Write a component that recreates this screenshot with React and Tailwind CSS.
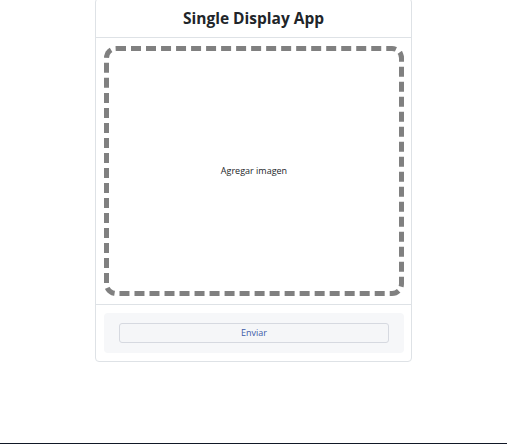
export default function App() {
  return (
    <div className="h-[444px] w-full border-b border-[#111827] bg-white overflow-hidden" style={{ fontFamily: '"Open Sans", "Noto Sans", sans-serif' }}>
      <div className="mx-auto -mt-[2px] w-[317px] rounded border border-[#dee2e6] bg-white">
        <div className="flex h-[39px] items-center justify-center border-b border-[#dee2e6] pt-[2px]">
          <h1 className="text-[15.5px] font-bold text-[#212529] leading-none">Single Display App</h1>
        </div>
        <div className="px-2 py-2">
          <div className="flex h-[250px] w-[300px] items-center justify-center rounded-[12px] border-[5px] border-dashed border-[#808080]">
            <span className="text-[9px] text-[#212529]">Agregar imagen</span>
          </div>
        </div>
        <div className="border-t border-[#dee2e6] p-2">
          <div className="flex h-[40px] w-[300px] items-center justify-center rounded bg-[#f6f7f9]">
            <button className="h-[20px] w-[270px] rounded-[3px] border border-[#d6d9e0] bg-[#f5f6f8] text-[9px] text-[#3d5aa8]">
              Enviar
            </button>
          </div>
        </div>
      </div>
    </div>
  );
}
